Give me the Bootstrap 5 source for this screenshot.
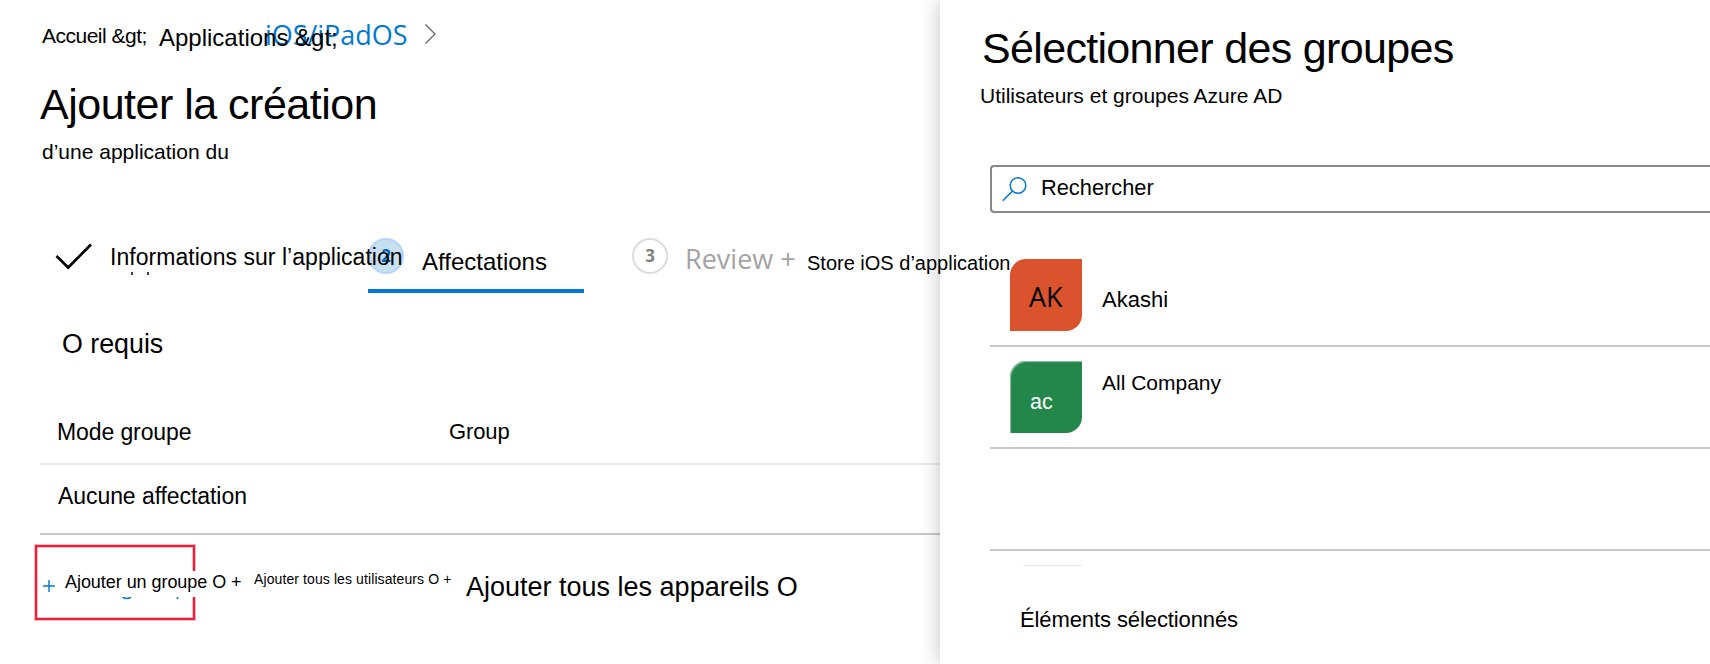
<!DOCTYPE html>
<html lang="fr">
<head>
<meta charset="utf-8">
<title>Ajouter la création d’une application</title>
<link href="https://cdn.jsdelivr.net/npm/bootstrap@5.3.0/dist/css/bootstrap.min.css" rel="stylesheet">
<style>
body{font-family:"Liberation Sans",Arial,sans-serif;color:#000;background:#fff;width:1710px;height:664px;overflow:hidden;line-height:1}
.txt{white-space:nowrap;line-height:1;flex:none;display:block;margin-bottom:0;font-weight:400}
.over{position:relative;z-index:3}
.segoe{font-family:"Open Sans","Noto Sans",sans-serif;font-size:27px}
svg{flex:none;display:block}
.main-pane{width:940px;height:664px}
.side-pane{width:770px;height:664px;box-shadow:0 0 20px 0 rgba(0,0,0,.24);background:#fff;z-index:2}

.crumbs{height:74px;padding-left:42px}
.c-home{font-size:21px;letter-spacing:-.5px;width:117px;margin-top:25px}
.c-apps{font-size:24px;width:106px;margin-top:26px}
.c-ios{width:160px;margin-top:21px;color:#0078d4;letter-spacing:-.05px}
.page-title{font-size:43px;letter-spacing:-.5px;margin:9px 0 0 40px}
.page-sub{font-size:21px;margin:15px 0 0 42px}

.stepper{margin:76px 0 0 53px;height:55px}
.step-info{width:315px;flex:none}
.step-info .txt{font-size:23px;letter-spacing:.04px;margin:8px 0 0 17px}
.leftover{left:78px;top:34px;width:2px;height:3px;background:#444;box-shadow:16px 0 #444}
.step-assign{width:216px;flex:none;border-bottom:4px solid #0078d4}
.step-assign .txt{font-size:24px;margin:12px 0 0 18px}
.step-review{margin-left:48px;flex:none}
.bubble{width:36px;height:36px;border-radius:50%;border:2px solid #ddd;font:700 17px/32px "Open Sans",sans-serif;color:#808080;text-align:center;flex:none}
.bubble-on{background:#c7e0f0;border-color:#b3d4fc;color:#0067b5}
.rev{width:122px;margin:7px 0 0 17px;color:#a3a3a3}
.store{font-size:20px;margin-top:15px}

.requis{font-size:26.8px;margin:38px 0 0 62px}
.thead-row{height:107px;margin-left:40px;padding:63px 0 0 17px;border-bottom:2px solid #eaeaea}
.tbody-row{height:70px;margin-left:40px;padding:20px 0 0 18px;border-bottom:2px solid #c8c8c8}
.col-mode{font-size:23px;letter-spacing:-.1px;width:392px}
.col-group{font-size:22px;letter-spacing:-.1px}
.none{font-size:23px;letter-spacing:-.07px}

.actions{margin:10px 0 0 35px}
.callout-box{width:160px;height:75px;border:2px solid #f01c3c;box-shadow:0 0 0 1px #fbb9c1,inset 0 0 0 1px #fbb9c1;padding:33px 0 0 6px}
.patch{background:#fff;width:180px;height:26px;margin:-9px 0 0 10px;padding:2px 0 0}
.add-group{font-size:18px;letter-spacing:-.05px}
.add-users{font-size:14px;letter-spacing:.1px;margin:27px 0 0 59px;width:212px}
.add-devices{font-size:27px;margin-top:29px}
.rest{left:84px;top:50px}

.side-title{font-size:43px;letter-spacing:-.67px;margin:27px 0 0 42px}
.side-sub{font-size:21px;margin:15px 0 0 40px}
.search{margin:59px 0 0 50px;height:48px;border:2px solid #888;border-right:0;border-radius:4px 0 0 4px;padding-left:10px}
.search .txt{font-size:21.8px;margin:10px 0 0 14px}
.groups{margin:32px 0 0 50px}
.group-row{height:102px;border-bottom:2px solid #c8c8c8;padding:14px 0 0 20px}
.avatar{width:72px;height:72px;border-radius:16px 0 16px 0;flex:none}
.ak{background:#da532c;padding:24px 0 0 19px}
.ac{background:#23874b;box-shadow:inset 1px 1px 1px #8cc7a2;padding:31px 0 0 20px;color:#fff;font-size:21.5px}
.g-name{font-size:22px;margin:30px 0 0 20px}
.g-company{font-size:21px;margin:11px 0 0 20px}
.ghost{width:59px;height:1px;background:#e6e6f4;margin:14px 0 0 83px}
.selected{font-size:22px;letter-spacing:-.1px;margin:43px 0 0 80px}
</style>
<script src="https://cdn.jsdelivr.net/npm/bootstrap@5.3.0/dist/js/bootstrap.bundle.min.js"></script>
</head>
<body class="d-flex">
<main class="main-pane flex-shrink-0">
  <nav class="crumbs d-flex align-items-start">
    <span class="txt c-home">Accueil &amp;gt;</span>
    <span class="txt c-apps over">Applications &amp;gt;</span>
    <a class="txt segoe c-ios text-decoration-none">iOS/iPadOS</a>
    <svg class="mt-4" width="14" height="22" viewBox="0 0 14 22"><path d="M.5 .5L10 10L.5 19.500" fill="none" stroke="#666" stroke-width="1.300"/></svg>
  </nav>
  <h1 class="txt page-title">Ajouter la création</h1>
  <p class="txt page-sub">d’une application du</p>

  <div class="stepper d-flex">
    <div class="step-info d-flex align-items-start position-relative">
      <svg width="40" height="36" viewBox="0 0 40 36"><path d="M3.500 18L15.200 29.500L38 6.500" fill="none" stroke="#000" stroke-width="2.700"/></svg>
      <span class="txt over">Informations sur l’application</span>
      <i class="leftover position-absolute"></i>
    </div>
    <div class="step-assign d-flex align-items-start">
      <span class="bubble bubble-on">2</span>
      <span class="txt">Affectations</span>
    </div>
    <div class="step-review d-flex align-items-start">
      <span class="bubble">3</span>
      <span class="txt segoe rev">Review +</span>
      <span class="txt store over">Store iOS d’application</span>
    </div>
  </div>

  <h2 class="txt requis">O requis</h2>
  <div class="thead-row d-flex align-items-start">
    <span class="txt col-mode">Mode groupe</span>
    <span class="txt col-group">Group</span>
  </div>
  <div class="tbody-row"><span class="txt none">Aucune affectation</span></div>

  <div class="actions d-flex align-items-start">
    <div class="callout-box d-flex align-items-start position-relative flex-shrink-0">
      <svg width="12" height="12" viewBox="0 0 12 12"><path d="M6 0V12M0 6H12" stroke="#0078d4" stroke-width="1.4"/></svg>
      <span class="txt patch add-group over">Ajouter un groupe O +</span>
      <svg class="rest position-absolute" width="60" height="4" viewBox="0 0 60 4"><path d="M1.500 0Q6 3 10 0M56.500 0V2" fill="none" stroke="#0078d4" stroke-width="1.6"/></svg>
    </div>
    <span class="txt add-users">Ajouter tous les utilisateurs O +</span>
    <span class="txt add-devices">Ajouter tous les appareils O</span>
  </div>
</main>

<aside class="side-pane flex-shrink-0">
  <h2 class="txt side-title">Sélectionner des groupes</h2>
  <p class="txt side-sub">Utilisateurs et groupes Azure AD</p>
  <div class="search d-flex align-items-start">
    <svg width="25" height="35" viewBox="0 -9 25 35"><circle cx="16" cy="9.500" r="7.800" fill="none" stroke="#0078d4" stroke-width="1.500"/><path d="M10.500 15L.8 24.700" stroke="#0078d4" stroke-width="1.600"/></svg>
    <span class="txt">Rechercher</span>
  </div>
  <div class="groups">
    <div class="group-row d-flex align-items-start">
      <div class="avatar ak"><span class="txt segoe">AK</span></div>
      <span class="txt g-name">Akashi</span>
    </div>
    <div class="group-row d-flex align-items-start">
      <div class="avatar ac"><span class="txt">ac</span></div>
      <span class="txt g-company">All Company</span>
    </div>
    <div class="group-row"></div>
  </div>
  <div class="ghost"></div>
  <p class="txt selected">Éléments sélectionnés</p>
</aside>
</body>
</html>
